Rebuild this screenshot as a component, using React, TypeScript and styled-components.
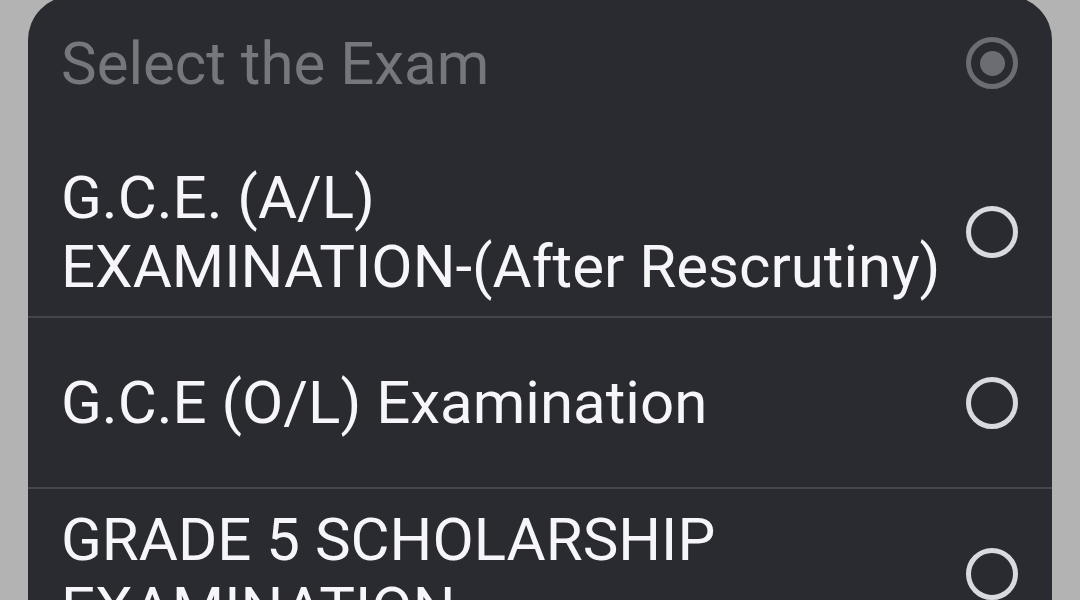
import styled, { createGlobalStyle } from "styled-components";

const GlobalStyle = createGlobalStyle`
  html, body {
    margin: 0;
    padding: 0;
    background: #b3b3b3;
    font-family: Roboto, "Noto Sans", sans-serif;
    overflow: hidden;
  }
`;

const Page = styled.div`
  width: 1080px;
  height: 600px;
  padding: 0 28px;
  box-sizing: border-box;
  overflow: hidden;
`;

const Sheet = styled.div`
  margin-top: -4px;
  background: #2a2b30;
  border-radius: 44px 44px 0 0;
  display: flex;
  flex-direction: column;
`;

const Header = styled.div`
  display: flex;
  align-items: center;
  justify-content: space-between;
  padding: 0 34px 0 33px;
  height: 134px;
  margin-bottom: 17px;
`;

const Title = styled.span`
  font-size: 60px;
  color: #76777c;
`;

const Option = styled.div<{ $divider?: boolean }>`
  display: flex;
  align-items: center;
  justify-content: space-between;
  gap: 24px;
  padding: 0 34px 0 33px;
  min-height: 169px;
  border-bottom: ${(p) => (p.$divider ? "2px solid #45464b" : "none")};
`;

const Label = styled.span`
  font-size: 60px;
  line-height: 69px;
  color: #f6f5f9;
`;

const Radio = styled.span<{ $checked?: boolean }>`
  flex: none;
  width: 52px;
  height: 52px;
  box-sizing: border-box;
  border-radius: 50%;
  border: 5px solid ${(p) => (p.$checked ? "#6c6d73" : "#d9d9e1")};
  display: flex;
  align-items: center;
  justify-content: center;
  &::after {
    content: "";
    display: ${(p) => (p.$checked ? "block" : "none")};
    width: 25px;
    height: 25px;
    border-radius: 50%;
    background: #6c6d73;
  }
`;

const options = [
  { label: ["G.C.E. (A/L)", "EXAMINATION-(After Rescrutiny)"] },
  { label: ["G.C.E (O/L) Examination"] },
  { label: ["GRADE 5 SCHOLARSHIP", "EXAMINATION"] },
];

export default function App() {
  return (
    <Page>
      <GlobalStyle />
      <Sheet>
        <Header>
          <Title>Select the Exam</Title>
          <Radio $checked />
        </Header>
        {options.map((o, i) => (
          <Option key={i} $divider={i < options.length - 1}>
            <Label>
              {o.label.map((l, j) => (
                <span key={j}>
                  {j > 0 && <br />}
                  {l}
                </span>
              ))}
            </Label>
            <Radio />
          </Option>
        ))}
      </Sheet>
    </Page>
  );
}
